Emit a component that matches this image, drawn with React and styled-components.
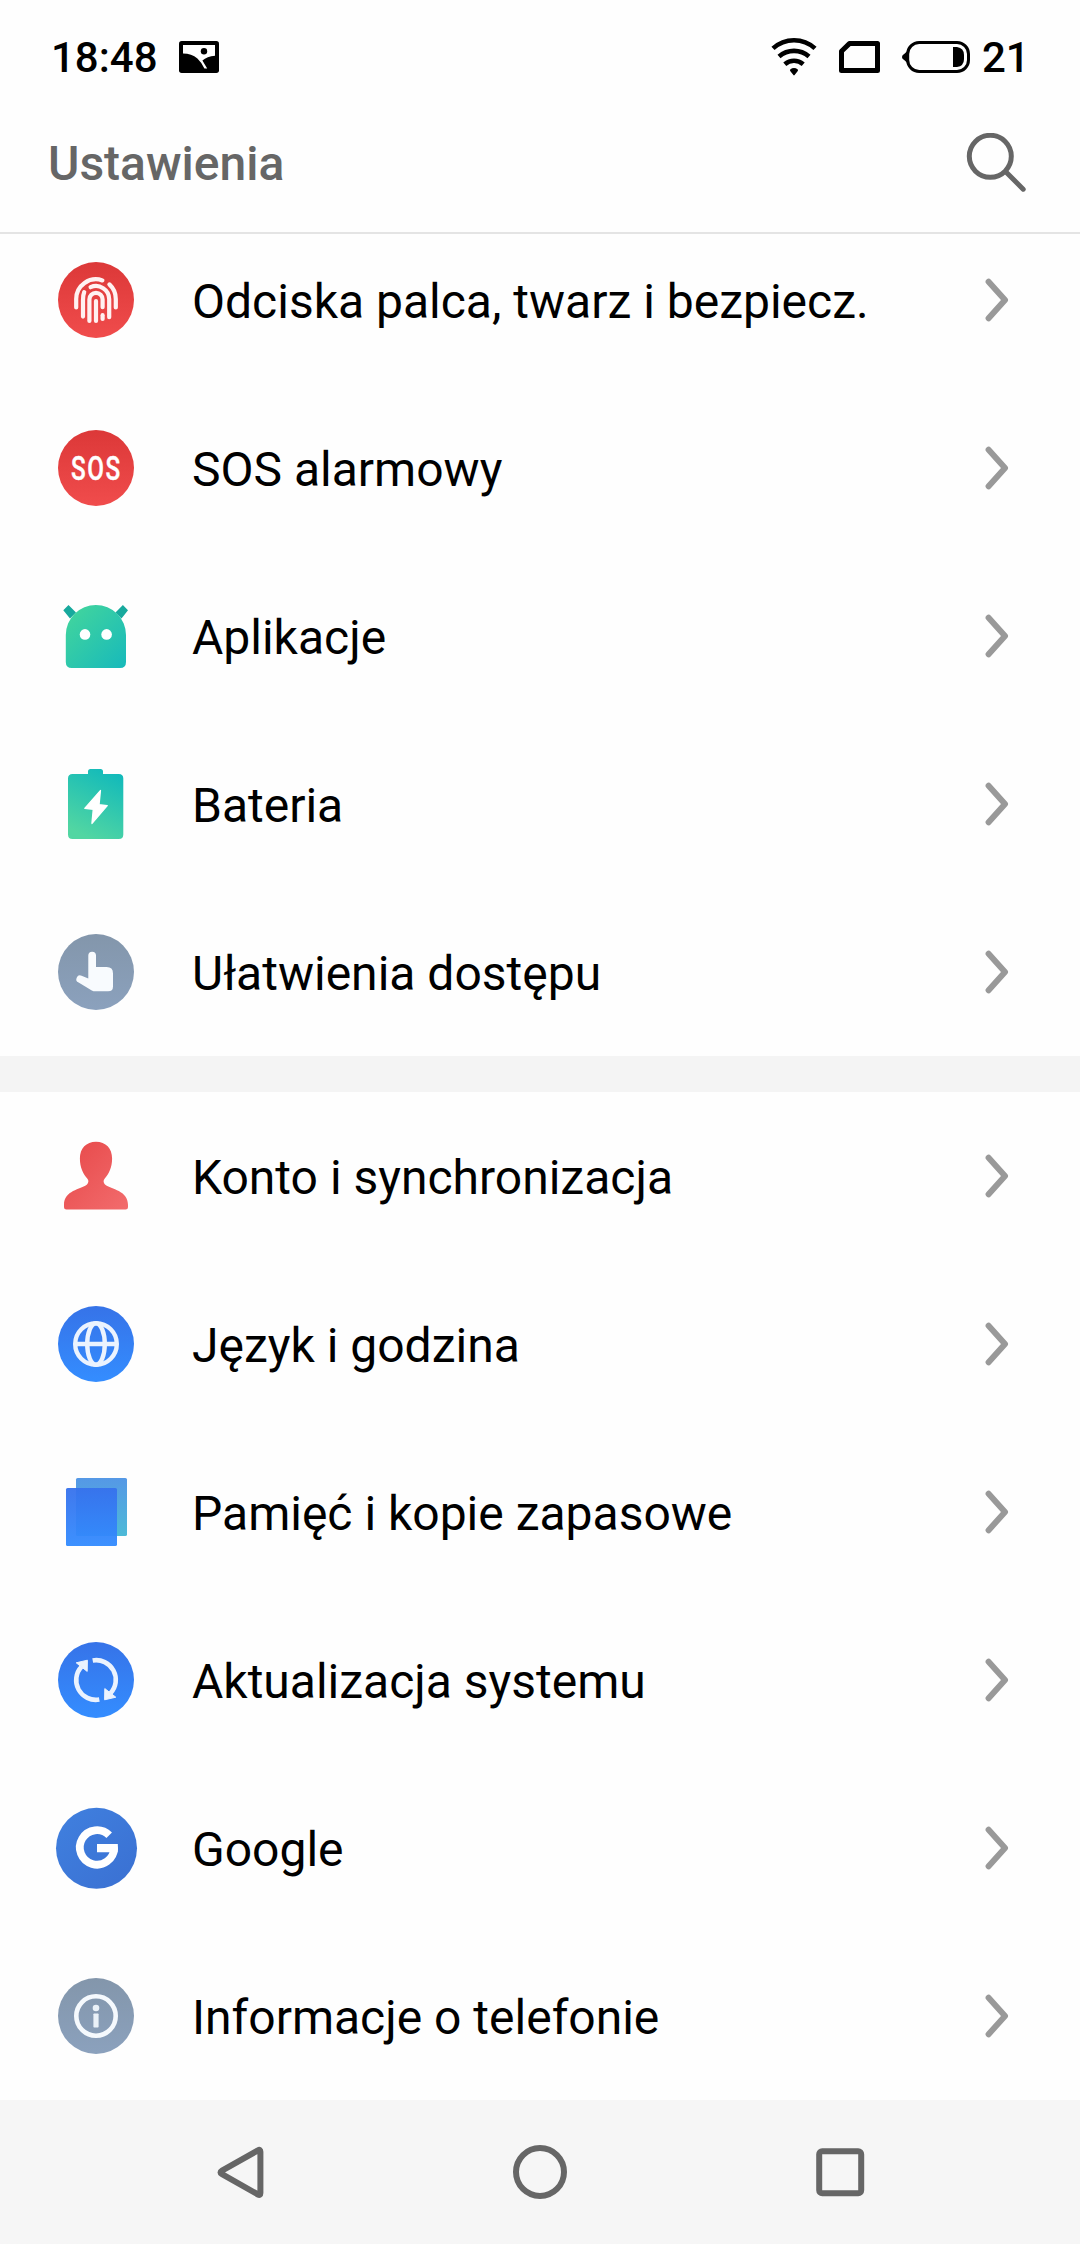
import styled, { createGlobalStyle } from "styled-components";

const App = () => {
  return (
    <>
      <GlobalStyle />
      <Screen>
        <StatusBar>
          <Clock>18:48</Clock>
          <PictureIcon />
          <StatusIcons>
            <WifiIcon />
            <SimIcon />
            <BatteryStatusIcon />
          </StatusIcons>
          <BatteryLevel>21</BatteryLevel>
        </StatusBar>

        <Header>
          <h1>Ustawienia</h1>
          <SearchButton aria-label="Szukaj">
            <SearchIcon />
          </SearchButton>
        </Header>

        <Content>
          {sections.map((items, index) => (
            <Section key={index}>
              {items.map((curElem) => {
                const { label, Icon } = curElem;
                return (
                  <Row key={label}>
                    <RowIcon viewBox="0 0 96 96">
                      <Icon />
                    </RowIcon>
                    <RowLabel>{label}</RowLabel>
                    <Chevron viewBox="0 0 26 44">
                      <path d="M4.6 3.8 21 22 4.6 40.2" />
                    </Chevron>
                  </Row>
                );
              })}
            </Section>
          ))}
        </Content>

        <NavBar>
          <NavButton aria-label="Wstecz">
            <svg width="60" height="60" viewBox="0 0 60 60">
              <path d="M48 8.3Q50.4 7 50.4 9.8V51Q50.4 53.8 48 52.5L12 32.1Q9 30.4 12 28.7Z" />
            </svg>
          </NavButton>
          <NavButton aria-label="Ekran główny">
            <svg width="60" height="60" viewBox="0 0 60 60">
              <circle cx="30" cy="30" r="24" />
            </svg>
          </NavButton>
          <NavButton aria-label="Ostatnie">
            <svg width="60" height="60" viewBox="0 0 60 60">
              <rect x="9.2" y="9.2" width="42" height="42" rx="3" />
            </svg>
          </NavButton>
        </NavBar>
      </Screen>
    </>
  );
};

/* status bar icons */

const PictureIcon = () => (
  <svg width="40" height="32" viewBox="0 0 40 32">
    <rect width="40" height="32" rx="2.7" />
    <path
      d="M4 4H36V14.8Q28 15.4 23.4 19.6L28.2 27.6H25.4Q22.4 21 18.4 17.4Q12.6 12.8 4 12.6Z"
      fill="#fff"
    />
    <circle cx="25" cy="10.3" r="3.2" />
  </svg>
);

const WifiIcon = () => (
  <svg width="46" height="40" viewBox="0 0 46 40">
    <g fill="none" stroke="#000" strokeWidth="4.6">
      <path d="M2 11.4A31 31 0 0 1 44 11.4" />
      <path d="M8 19.4A23 23 0 0 1 38 19.4" />
      <path d="M13.8 27.2A14 14 0 0 1 32.2 27.2" />
    </g>
    <path d="M19.2 32.4Q23 29.6 26.8 32.4Q27.4 33.2 26.6 34.2L23.6 38Q23 38.8 22.4 38L19.4 34.2Q18.6 33.2 19.2 32.4Z" />
  </svg>
);

const SimIcon = () => (
  <svg width="41" height="32" viewBox="0 0 41 32">
    <path
      d="M2.5 29.5V10.2L10.4 2.6H38.5V29.5Z"
      fill="none"
      stroke="#000"
      strokeWidth="5"
      strokeLinejoin="round"
    />
  </svg>
);

const BatteryStatusIcon = () => (
  <svg width="68" height="32" viewBox="0 0 68 32">
    <rect
      x="5.7"
      y="1.5"
      width="60.8"
      height="29"
      rx="11.5"
      fill="none"
      stroke="#000"
      strokeWidth="3"
    />
    <path d="M5 10.6Q4 11 3.6 11.8L.6 14.2Q-.5 16 .6 17.8L3.6 20.2Q4 21 5 21.4Z" />
    <path d="M51 6H55Q62 7 62 14V18Q62 25 55 26H51Z" />
  </svg>
);

const SearchIcon = () => (
  <svg width="60" height="60" viewBox="0 0 60 60">
    <g fill="none" stroke="#666" strokeWidth="5" strokeLinecap="round">
      <circle cx="24.3" cy="23.3" r="21" />
      <path d="M40 39 57.2 56.2" />
    </g>
  </svg>
);

/* list icons, drawn in a 96 x 96 box */

const Gradient = ({ id, from, to, diagonal, flip }) => (
  <defs>
    <linearGradient
      id={id}
      x1={flip ? 0.8 : 0}
      y1="0"
      x2={flip ? 0.4 : diagonal ? 1 : 0}
      y2="1"
    >
      <stop offset="0" stopColor={from} />
      <stop offset="1" stopColor={to} />
    </linearGradient>
  </defs>
);

const FingerprintIcon = () => (
  <>
    <Gradient id="finger" from="#dc3838" to="#f04c4c" />
    <circle cx="48" cy="48" r="38" fill="url(#finger)" />
    <g fill="none" stroke="#fff1f1" strokeWidth="4.2" strokeLinecap="round">
      <path d="M28.2 55.4V47A19.8 19.8 0 0 1 54.4 28.4" />
      <path d="M61.4 32.4A19.8 19.8 0 0 1 67.8 47V55.4" />
      <path d="M36.2 40.2Q35 43 35 48V64.6" />
      <path d="M42.6 35.2A13.2 13.2 0 0 1 61.2 47.2V65.2" />
      <path d="M41.4 69V47.4A6.6 6.6 0 0 1 54.6 47.4V55.2" />
      <path d="M54.6 63.2V67" />
      <path d="M48 49V69" />
    </g>
  </>
);

const SosIcon = () => (
  <>
    <Gradient id="sos" from="#dc3838" to="#f04c4c" />
    <circle cx="48" cy="48" r="38" fill="url(#sos)" />
    <SosText x="41.4 64.6 88.4" y="59.6" transform="scale(0.735 1)">
      SOS
    </SosText>
  </>
);

const AppsIcon = () => (
  <>
    <Gradient id="apps" from="#45d79b" to="#17b9bb" diagonal />
    <path
      d="M20.5 17 28 24.5 22 30.5 15.3 22.3ZM74.9 17 67.5 24.5 73.5 30.5 80 22.3Z"
      fill="#17a99d"
    />
    <path
      d="M17.8 47A30.1 30.1 0 0 1 78 47V74Q78 80 72 80H23.8Q17.8 80 17.8 74Z"
      fill="url(#apps)"
    />
    <circle cx="37" cy="46.4" r="5.3" fill="#fff" />
    <circle cx="58.6" cy="46.4" r="5.3" fill="#fff" />
  </>
);

const BatteryIcon = () => (
  <>
    <Gradient id="battery" from="#10b9bb" to="#52d6a2" flip />
    <path
      d="M24.5 18H40V15.5Q40 13 42.5 13H52.5Q55 13 55 15.5V18H70.8Q75.3 18 75.3 22.5V78.5Q75.3 83 70.8 83H24.5Q20 83 20 78.5V22.5Q20 18 24.5 18Z"
      fill="url(#battery)"
    />
    <path
      d="M52.4 34.6 51 48.8 59.2 49.6 44 67.4 45.3 53.2 36.8 52.4Z"
      fill="#fff"
      stroke="#fff"
      strokeWidth="1.4"
      strokeLinejoin="round"
    />
  </>
);

const TouchIcon = () => (
  <>
    <Gradient id="touch" from="#8396ab" to="#8ba1bd" />
    <circle cx="48" cy="48" r="38" fill="url(#touch)" />
    <path
      d="M40.3 54.6V31.6A3.85 3.85 0 0 1 48 31.6V43H58.6Q65 43 65 49.4V62.4Q65 67.3 60.1 67.3H47.6Q45.4 67.3 43.8 66.4L30.6 58.6A3.7 3.7 0 0 1 33.6 51.8Z"
      fill="#f8fbfe"
    />
  </>
);

const AccountIcon = () => (
  <>
    <Gradient id="account" from="#e74849" to="#f26c6d" diagonal />
    <path
      d="M48 13.8C57.8 13.8 64.1 20.4 64.1 30.6C64.1 39.4 61 45.8 56.6 50.8C55.2 52.4 55.2 54.8 57 56.4C63.4 61.6 80 62 80 76.8V79.2Q80 81.6 77.6 81.6H18.4Q16 81.6 16 79.2V76.8C16 62 32.6 61.6 39 56.4C40.8 54.8 40.8 52.4 39.4 50.8C35 45.8 31.9 39.4 31.9 30.6C31.9 20.4 38.2 13.8 48 13.8Z"
      fill="url(#account)"
    />
  </>
);

const GlobeIcon = () => (
  <>
    <Gradient id="globe" from="#3673e8" to="#348dff" />
    <circle cx="48" cy="48" r="38" fill="url(#globe)" />
    <g fill="none" stroke="#ebf3fe" strokeWidth="4.4">
      <circle cx="48" cy="48" r="20.8" />
      <ellipse cx="48" cy="48" rx="8.8" ry="20.8" />
      <path d="M27 48H69" />
    </g>
  </>
);

const BackupIcon = () => (
  <>
    <Gradient id="backupBack" from="#5598e6" to="#4dbad7" />
    <Gradient id="backupFront" from="#3671ec" to="#328bff" />
    <rect x="28" y="14" width="51" height="58" rx="1.6" fill="url(#backupBack)" />
    <rect
      x="18"
      y="24"
      width="51"
      height="58"
      rx="1.6"
      fill="url(#backupFront)"
      fillOpacity="0.95"
    />
  </>
);

const UpdateIcon = () => (
  <>
    <Gradient id="update" from="#3673e8" to="#348dff" />
    <circle cx="48" cy="48" r="38" fill="url(#update)" />
    <g fill="none" stroke="#ebf3fe" strokeWidth="4.6">
      <path d="M44.7 28.5A19.6 19.6 0 0 1 62.4 61.3" />
      <path d="M51.3 67.5A19.6 19.6 0 0 1 33.6 34.7" />
    </g>
    <path
      d="M28.2 30.8 39.4 28.2 39.2 39.4ZM67.8 65.2 56.6 67.8 56.8 56.6Z"
      fill="#ebf3fe"
      stroke="#ebf3fe"
      strokeLinejoin="round"
    />
  </>
);

const GoogleIcon = () => (
  <>
    <Gradient id="google" from="#4080df" to="#3a70d2" diagonal />
    <circle cx="48.5" cy="48.3" r="40.5" fill="url(#google)" />
    <path
      d="M61.2 35.3A17.2 17.2 0 1 0 66.2 48.1"
      fill="none"
      stroke="#fff"
      strokeWidth="7.8"
    />
    <path d="M49 44H69.8Q70.3 48 69.6 52.3H49Z" fill="#fff" />
  </>
);

const InfoIcon = () => (
  <>
    <Gradient id="info" from="#8396ab" to="#8ba1bd" />
    <circle cx="48" cy="48" r="38" fill="url(#info)" />
    <circle
      cx="48"
      cy="48"
      r="19.7"
      fill="none"
      stroke="#f5f9fd"
      strokeWidth="4.6"
    />
    <circle cx="48" cy="40" r="3.3" fill="#eaf1f8" />
    <rect x="45.4" y="45.4" width="5.2" height="14.2" rx="0.8" fill="#eaf1f8" />
  </>
);

const sections = [
  [
    { label: "Odciska palca, twarz i bezpiecz.", Icon: FingerprintIcon },
    { label: "SOS alarmowy", Icon: SosIcon },
    { label: "Aplikacje", Icon: AppsIcon },
    { label: "Bateria", Icon: BatteryIcon },
    { label: "Ułatwienia dostępu", Icon: TouchIcon },
  ],
  [
    { label: "Konto i synchronizacja", Icon: AccountIcon },
    { label: "Język i godzina", Icon: GlobeIcon },
    { label: "Pamięć i kopie zapasowe", Icon: BackupIcon },
    { label: "Aktualizacja systemu", Icon: UpdateIcon },
    { label: "Google", Icon: GoogleIcon },
    { label: "Informacje o telefonie", Icon: InfoIcon },
  ],
];

const GlobalStyle = createGlobalStyle`
  * {
    margin: 0;
    padding: 0;
    box-sizing: border-box;
  }

  body {
    font-family: Roboto, sans-serif;
    background: #fff;
  }

  svg {
    display: block;
    flex-shrink: 0;
  }
`;

const Screen = styled.div`
  width: 1080px;
  height: 2244px;
  display: flex;
  flex-direction: column;
  background: #fefefe;
  overflow: hidden;
`;

const StatusBar = styled.div`
  height: 114px;
  padding: 0 52px 0 51px;
  display: flex;
  align-items: center;
  flex-shrink: 0;
`;

const Clock = styled.span`
  width: 128px;
  padding-top: 2px;
  font-size: 42px;
  font-weight: 500;
  line-height: 48px;
  white-space: nowrap;
`;

const StatusIcons = styled.div`
  margin-left: auto;
  display: flex;
  align-items: center;
  gap: 22px;
`;

const BatteryLevel = styled.span`
  width: 46px;
  margin-left: 12px;
  padding-top: 2px;
  font-size: 42px;
  font-weight: 500;
  line-height: 48px;
`;

const Header = styled.header`
  height: 120px;
  padding: 0 54px 20px 48px;
  display: flex;
  justify-content: space-between;
  align-items: center;
  flex-shrink: 0;
  border-bottom: 2px solid #e4e4e4;

  h1 {
    font-size: 48px;
    font-weight: 500;
    color: #666;
  }
`;

const SearchButton = styled.button`
  border: none;
  background: none;
`;

const Content = styled.main`
  flex: 1;
  display: flex;
  flex-direction: column;
  justify-content: flex-end;
  overflow: hidden;
`;

const Section = styled.section`
  & + & {
    border-top: 36px solid #f4f4f4;
  }
`;

const Row = styled.div`
  height: 168px;
  padding: 0 70px 0 48px;
  display: flex;
  align-items: center;
`;

const RowIcon = styled.svg`
  width: 96px;
  height: 96px;
`;

const RowLabel = styled.span`
  flex: 1;
  margin-left: 48px;
  padding-top: 3px;
  font-size: 48px;
  line-height: 56px;
  color: #000;
  white-space: nowrap;
`;

const Chevron = styled.svg`
  width: 26px;
  height: 44px;
  fill: none;
  stroke: #999;
  stroke-width: 6;
  stroke-linecap: round;
  stroke-linejoin: round;
`;

const SosText = styled.text`
  font-family: Roboto, sans-serif;
  font-size: 33px;
  font-weight: 500;
  text-anchor: middle;
  fill: #fff;
  stroke: #fff;
  stroke-width: 0.4;
`;

const NavBar = styled.nav`
  height: 144px;
  padding: 0 90px;
  display: grid;
  grid-template-columns: repeat(3, 1fr);
  flex-shrink: 0;
  background: #f6f6f6;
`;

const NavButton = styled.button`
  display: flex;
  justify-content: center;
  align-items: center;
  border: none;
  background: none;

  svg {
    fill: none;
    stroke: #666;
    stroke-width: 6;
    stroke-linejoin: round;
    overflow: visible;
  }
`;

export default App;
